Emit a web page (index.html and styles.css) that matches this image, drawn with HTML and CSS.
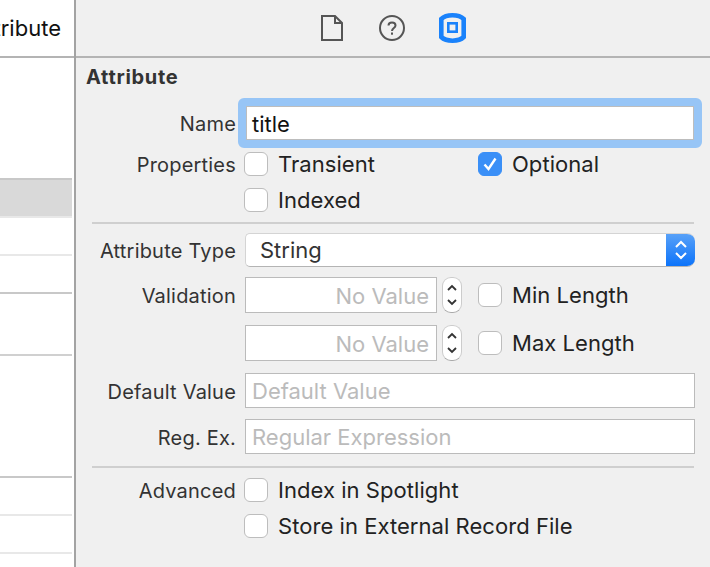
FILE: index.html
```html
<!DOCTYPE html>
<html lang="en">
<head>
<meta charset="utf-8">
<title>Attribute inspector</title>
<link rel="stylesheet" href="styles.css">
</head>
<body>
<div class="app">
  <aside class="left">
    <div class="left-head"><span>Attribute</span></div>
    <div class="rows">
      <div class="row r1"></div>
      <div class="row r2"></div>
      <div class="row r3"></div>
      <div class="row r4"></div>
      <div class="row r5"></div>
      <div class="row r6"></div>
      <div class="row r7"></div>
      <div class="row r8"></div>
    </div>
  </aside>
  <main class="right">
    <div class="toolbar">
      <svg class="tb-file" width="22" height="26" viewBox="0 0 22 26"><path d="M1 1H14L21 8V25H1Z M14 1V8H21" fill="none" stroke="#555" stroke-width="2"/></svg>
      <svg class="tb-help" width="26" height="26" viewBox="0 0 26 26"><circle cx="13" cy="13" r="12" fill="none" stroke="#555" stroke-width="2"/><path d="M9.500 10.500C9.500 8.500 11 7.500 13 7.500S16.500 8.700 16.500 10.500C16.500 13 13 13 13 16" fill="none" stroke="#555" stroke-width="2"/><rect x="12" y="17.500" width="2" height="2.200" fill="#555"/></svg>
      <svg class="tb-data" width="27" height="30" viewBox="0 0 27 30"><path d="M13.500 2.300C18 2.300 22 3.300 24.700 6V24C22 26.700 18 27.700 13.500 27.700S5 26.700 2.300 24V6C5 3.300 9 2.300 13.500 2.300Z" fill="none" stroke="#1a82fb" stroke-width="4.600"/><rect x="9.300" y="10.300" width="8.400" height="8.400" fill="none" stroke="#1a82fb" stroke-width="2.600"/></svg>
    </div>
    <div class="inspector">
      <h2 class="title">Attribute</h2>
      <div class="form">
        <div class="line name-line">
          <label class="lab">Name</label>
          <div class="focus"><span>title</span></div>
        </div>
        <div class="line h36 props">
          <label class="lab">Properties</label>
          <div class="opts">
            <div class="chk-wrap w234"><span class="box"></span><span class="txt">Transient</span></div>
            <div class="chk-wrap"><span class="box on"><svg width="16" height="16" viewBox="0 0 16 16"><path d="M2.500 8.500L6.500 13L13.500 2.500" fill="none" stroke="#fff" stroke-width="2.400"/></svg></span><span class="txt">Optional</span></div>
          </div>
        </div>
        <div class="line h36">
          <span class="lab"></span>
          <div class="chk-wrap"><span class="box"></span><span class="txt">Indexed</span></div>
        </div>
        <hr class="sep sep1">
        <div class="line type-line">
          <label class="lab">Attribute Type</label>
          <div class="select"><span>String</span>
            <div class="select-btn"><svg width="14" height="24" viewBox="0 0 14 24"><path d="M2 9L7 4L12 9M2 15L7 20L12 15" fill="none" stroke="#fff" stroke-width="2"/></svg></div>
          </div>
        </div>
        <div class="line val-line v1">
          <label class="lab">Validation</label>
          <div class="field num"><span>No Value</span></div>
          <div class="stepper"><svg width="12" height="30" viewBox="0 0 12 30"><path d="M2 10L6 6L10 10M2 20L6 24L10 20" fill="none" stroke="#333" stroke-width="1.800"/></svg></div>
          <div class="chk-wrap"><span class="box"></span><span class="txt">Min Length</span></div>
        </div>
        <div class="line val-line v2">
          <span class="lab"></span>
          <div class="field num"><span>No Value</span></div>
          <div class="stepper"><svg width="12" height="30" viewBox="0 0 12 30"><path d="M2 10L6 6L10 10M2 20L6 24L10 20" fill="none" stroke="#333" stroke-width="1.800"/></svg></div>
          <div class="chk-wrap"><span class="box"></span><span class="txt">Max Length</span></div>
        </div>
        <div class="line text-line t1">
          <label class="lab">Default Value</label>
          <div class="field wide"><span>Default Value</span></div>
        </div>
        <div class="line text-line t2">
          <label class="lab">Reg. Ex.</label>
          <div class="field wide"><span>Regular Expression</span></div>
        </div>
        <hr class="sep sep2">
        <div class="line h36">
          <label class="lab">Advanced</label>
          <div class="chk-wrap"><span class="box"></span><span class="txt">Index in Spotlight</span></div>
        </div>
        <div class="line h36">
          <span class="lab"></span>
          <div class="chk-wrap"><span class="box"></span><span class="txt">Store in External Record File</span></div>
        </div>
      </div>
    </div>
  </main>
</div>
</body>
</html>
```
FILE: styles.css
```css
* { box-sizing: border-box; }
html, body { margin: 0; padding: 0; }
body {
  width: 710px;
  height: 567px;
  overflow: hidden;
  font-family: "Inter", "Liberation Sans", sans-serif;
  font-size: 22px;
  color: #222;
  background: #f0f0f0;
}
.app { display: flex; width: 710px; height: 567px; }
.left {
  width: 76px;
  flex: none;
  background: #fff;
  border-right: 2px solid #a3a3a3;
  display: flex;
  flex-direction: column;
}
.left-head {
  height: 58px;
  flex: none;
  border-bottom: 2px solid #b4b4b4;
  display: flex;
  justify-content: flex-end;
  align-items: center;
  overflow: hidden;
  padding-right: 13px;
  color: #111;
}
.left-head span { white-space: nowrap; }
.rows { width: 72px; flex: 1; display: flex; flex-direction: column; }
.row { flex: none; border-bottom: 2px solid #e8e8e8; }
.r1 { height: 120px; border-bottom: 0; }
.r2 { height: 40px; background: #d9d9d9; border-top: 2px solid #c8c8c8; }
.r3 { height: 38px; }
.r4 { height: 38px; border-bottom-color: #c8c8c8; }
.r5 { height: 62px; border-bottom-color: #d0d0d0; }
.r6 { height: 122px; border-bottom-color: #c8c8c8; }
.r7 { height: 38px; }
.r8 { height: 38px; }
.right { flex: 1; min-width: 0; display: flex; flex-direction: column; }
.toolbar {
  height: 58px;
  flex: none;
  border-bottom: 2px solid #b4b4b4;
  display: flex;
  align-items: center;
  padding-left: 245px;
}
.tb-file { margin-right: 36px; }
.tb-help { margin-right: 34px; }
.inspector { padding: 7px 0 0 10px; }
.title { margin: 0 0 11px; font-size: 20px; line-height: 24px; font-weight: 700; letter-spacing: 0.7px; color: #333; }
.form { margin-left: 1px; margin-top: -2px; }
.line { display: flex; align-items: center; }
.lab {
  width: 149px;
  flex: none;
  text-align: right;
  margin-right: 9px;
  padding-top: 2px;
  font-size: 20px;
  letter-spacing: 0.2px;
  color: #333;
  white-space: nowrap;
}
.name-line { height: 50px; }
.focus {
  width: 464px;
  height: 50px;
  margin-left: -7px;
  border: 8px solid #97c5f6;
  border-radius: 6px;
  background: #fff;
  box-shadow: inset 0 0 0 1px #bdbdbd;
  display: flex;
  align-items: center;
  padding: 2px 0 0 6px;
  color: #111;
}
.h36 { height: 36px; }
.props { margin-top: -2px; }
.opts { display: flex; margin-left: -1px; }
.w234 { width: 234px; }
.chk-wrap { display: flex; align-items: center; }
.h36 > .chk-wrap { margin-left: -1px; }
.box {
  width: 24px;
  height: 24px;
  flex: none;
  border: 1px solid #bdbdbd;
  border-radius: 6px;
  background: #fff;
  margin-right: 10px;
  display: flex;
  align-items: center;
  justify-content: center;
}
.box.on { background: #3a8ff7; border-color: #3a8ff7; }
.txt { color: #222; white-space: nowrap; letter-spacing: 0.05px; }
.sep { border: 0; height: 2px; background: #cfcfcf; margin: 0 0 0 5px; width: 602px; }
.sep1 { margin-top: 4px; margin-bottom: 9px; }
.sep2 { margin-top: 12px; margin-bottom: 4px; }
.type-line { height: 34px; }
.select {
  width: 450px;
  height: 34px;
  background: #fff;
  border-top: 1px solid #d4d4d4;
  border-left: 1px solid #d4d4d4;
  border-bottom: 1px solid #b4b4b4;
  border-radius: 5px 8px 8px 5px;
  display: flex;
  align-items: center;
  justify-content: space-between;
  padding-left: 14px;
  overflow: hidden;
  color: #333;
}
.select-btn {
  width: 29px;
  height: 34px;
  background: linear-gradient(#5aa2f8, #0a72fa);
  display: flex;
  align-items: center;
  justify-content: center;
}
.val-line { height: 36px; }
.v1 { margin-top: 10px; }
.v2 { margin-top: 12px; }
.field {
  background: #fff;
  border: 1px solid #bbb;
  color: #bbb;
  display: flex;
  align-items: center;
}
.num { width: 192px; height: 36px; justify-content: flex-end; padding: 1px 7px 0 0; }
.stepper {
  width: 20px;
  height: 36px;
  margin-left: 5px;
  margin-right: 16px;
  background: #fff;
  border: 1px solid #ccc;
  border-bottom-color: #aaa;
  border-radius: 9px;
  display: flex;
  align-items: center;
  justify-content: center;
}
.wide { width: 450px; height: 35px; padding: 1px 0 0 6px; }
.text-line { height: 35px; }
.t1 { margin-top: 12px; }
.t2 { margin-top: 11px; }
```
